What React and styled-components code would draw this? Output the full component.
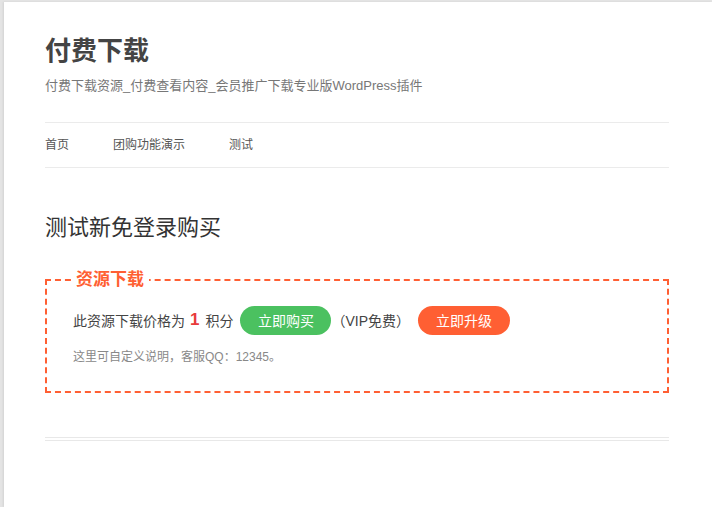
import React from "react";
import styled, { createGlobalStyle } from "styled-components";

const GlobalStyle = createGlobalStyle`
    html, body {
        margin: 0;
        padding: 0;
        background: #e4e4e4;
        font-family: "Liberation Sans", "Noto Sans CJK SC", sans-serif;
    }
`

const Page = styled.div`
    margin: 2px 0 0 4px;
    min-height: 505px;
    background: #fff;
    box-shadow: -1px 0 2px rgba(0, 0, 0, 0.08);
    padding: 0 43px 0 41px;
    box-sizing: border-box;
    width: 708px;
`

const Header = styled.header`
    padding-top: 33px;
    .site-title {
        margin: 0;
        font-size: 26px;
        line-height: 32px;
        font-weight: bold;
        color: #444;
    }
    .site-desc {
        margin: 9px 0 0;
        font-size: 13px;
        line-height: 20px;
        color: #777;
    }
`

const Nav = styled.nav`
    margin-top: 26px;
    border-top: 1px solid #ebebeb;
    border-bottom: 1px solid #ebebeb;
    height: 41px;
    padding-bottom: 3px;
    display: flex;
    align-items: center;
    gap: 44px;
    font-size: 12px;
    color: #555;
`

const Article = styled.article`
    padding-top: 46px;
    .entry-title {
        margin: 0;
        font-size: 22px;
        line-height: 28px;
        font-weight: normal;
        color: #333;
    }
`

const DownloadBox = styled.fieldset`
    margin: 27px 0 0;
    padding: 14px 26px 24px;
    border: 2px dashed #ff5f33;
    legend {
        padding: 0 5px;
        margin-left: -2px;
        font-size: 17px;
        line-height: 22px;
        font-weight: bold;
        color: #ff5f33;
    }
`

const PriceRow = styled.div`
    display: flex;
    align-items: center;
    font-size: 14px;
    color: #444;
    height: 30px;
    .price {
        color: #e83b3b;
        font-weight: bold;
        font-size: 17px;
        margin: 0 6px 0 5px;
    }
    .vip {
        margin: 0 8px 0 0;
    }
`

const Button = styled.span`
    display: inline-flex;
    align-items: center;
    justify-content: center;
    height: 29px;
    width: ${props => props.width}px;
    border-radius: 15px;
    background: ${props => props.bg};
    color: #fff;
    font-size: 14px;
    margin-left: ${props => props.ml || 0}px;
`

const Note = styled.div`
    margin-top: 12px;
    font-size: 12px;
    line-height: 20px;
    color: #888;
`

const Separator = styled.div`
    margin-top: 44px;
    border-top: 4px double #e8e8e8;
`

export default function App() {
    return (
        <>
            <GlobalStyle />
            <Page>
                <Header>
                    <h1 className="site-title">付费下载</h1>
                    <p className="site-desc">付费下载资源_付费查看内容_会员推广下载专业版WordPress插件</p>
                </Header>
                <Nav>
                    <span>首页</span>
                    <span>团购功能演示</span>
                    <span>测试</span>
                </Nav>
                <Article>
                    <h2 className="entry-title">测试新免登录购买</h2>
                    <DownloadBox>
                        <legend>资源下载</legend>
                        <PriceRow>
                            此资源下载价格为<span className="price">1</span>积分
                            <Button bg="#4bc160" width={91} ml={7}>立即购买</Button>
                            <span className="vip">（VIP免费）</span>
                            <Button bg="#ff5f33" width={92}>立即升级</Button>
                        </PriceRow>
                        <Note>这里可自定义说明，客服QQ：12345。</Note>
                    </DownloadBox>
                    <Separator />
                </Article>
            </Page>
        </>
    );
}
